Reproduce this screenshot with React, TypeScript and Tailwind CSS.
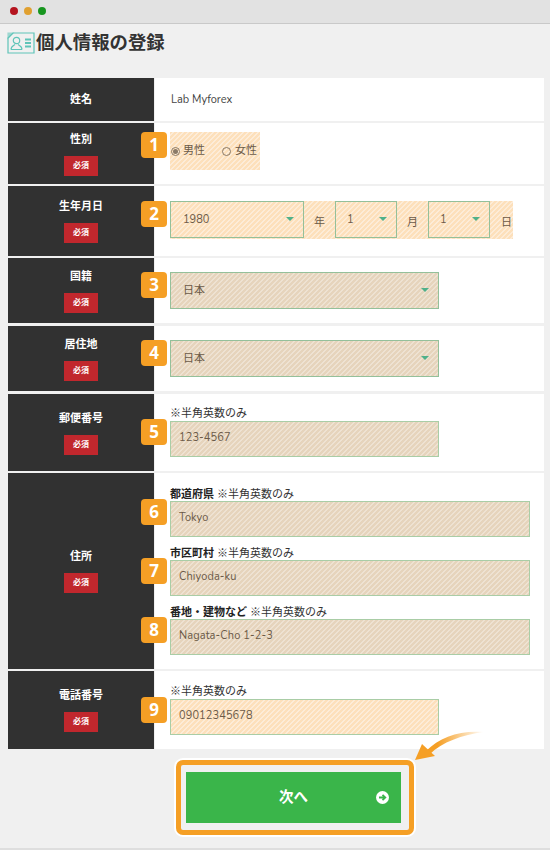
import type { ReactNode } from 'react';

const LIGHT = 'bg-[linear-gradient(135deg,#fde0bb_25%,#fdecd8_25%,#fdecd8_50%,#fde0bb_50%,#fde0bb_75%,#fdecd8_75%)] bg-[length:5px_5px]';
const DARK = 'bg-[linear-gradient(135deg,#e6d4bc_25%,#eee2d2_25%,#eee2d2_50%,#e6d4bc_50%,#e6d4bc_75%,#eee2d2_75%)] bg-[length:5px_5px]';
const FONT = "font-['Nunito','Lato','Noto_Sans_CJK_JP',sans-serif]";

function Num({ n, className = 'top-0' }: { n: number; className?: string }) {
    return (
        <div className={`absolute left-[-29px] ${className} w-[26px] h-[26px] rounded-[4px] bg-[#f59f25] text-white text-[17px] font-bold leading-[26px] text-center font-['Open_Sans',sans-serif]`}>
            {n}
        </div>
    );
}

function Caret() {
    return <div className="w-0 h-0 border-x-[4px] border-x-transparent border-t-[4px] border-t-[#4fb08a]" />;
}

function Select({ value, className, tone = '' }: { value: string; className: string; tone?: string }) {
    return (
        <div className={`relative h-[37px] border border-[#94c09a] pl-[12px] text-[11px] leading-[35px] text-[#6b5a48] ${tone} ${className}`}>
            {value}
            <div className="absolute top-[15px] right-[9px]">
                <Caret />
            </div>
        </div>
    );
}

function Field({ value, width, tone }: { value: string; width: string; tone: string }) {
    return (
        <div className={`h-[36px] border border-[#a9cda6] pl-[8px] text-[11px] leading-[32px] tracking-[0.1px] text-[#6b5a48] ${width} ${tone}`}>
            {value}
        </div>
    );
}

function Row({ label, height, required = true, children, contentClass = '' }: { label: string; height: string; required?: boolean; children: ReactNode; contentClass?: string }) {
    return (
        <div className={`flex ${height}`}>
            <div className="w-[146px] shrink-0 bg-[#313131] flex flex-col items-center justify-center gap-[9px] text-white">
                <div className={`text-[11px] font-bold leading-[14px] ${required ? 'mt-[1px]' : ''}`}>{label}</div>
                {required && (
                    <div className="w-[34px] h-[20px] bg-[#c1272d] text-[8px] font-bold leading-[20px] text-center">必須</div>
                )}
            </div>
            <div className={`ml-px flex-1 bg-white pl-[15px] ${contentClass}`}>{children}</div>
        </div>
    );
}

function Note({ bold, children }: { bold?: string; children?: ReactNode }) {
    return (
        <div className="h-[12px] text-[11px] leading-[14px] text-[#333]">
            {bold && <b className="font-bold text-[#222] mr-[3px]">{bold}</b>}
            {children ?? '※半角英数のみ'}
        </div>
    );
}

export default function App() {
    return (
        <div className={`relative w-[550px] h-[850px] overflow-hidden bg-[#f0f0f0] border-b-2 border-[#dedede] ${FONT}`}>
            {/* Window title bar */}
            <div className="h-[24px] bg-[#e2e2e2] border-b border-[#c9c9c9] flex items-center gap-[6px] pl-[10px] pb-[2px]">
                <span className="w-2 h-2 rounded-full bg-[#b5141f]" />
                <span className="w-2 h-2 rounded-full bg-[#e0a030]" />
                <span className="w-2 h-2 rounded-full bg-[#17961f]" />
            </div>

            <div className="px-[6px]">
                {/* Heading */}
                <div className="h-[54px] pt-[8px] flex items-start">
                    <svg width="28" height="22" viewBox="0 0 28 22" fill="none" stroke="#5fc4b8" strokeWidth="1.2" className="ml-px shrink-0">
                        <path d="M1 6 L6 1 H27 V21 H1 Z" />
                        <path d="M1 1 H6 L1 6 Z" fill="#5fc4b8" opacity="0.55" />
                        <circle cx="9.5" cy="8.5" r="3.2" />
                        <path d="M4 17.5 C4 14 7 13.5 8 12.5 M15 17.5 C15 14 12 13.5 11 12.5 M4 17.5 H15" />
                        <path d="M18 7.5 H24 M18 11 H24 M18 14.5 H24" strokeWidth="1.8" />
                    </svg>
                    <h1 className="ml-px mt-[-2px] text-[18.4px] font-bold leading-[22px] text-[#333] font-['Noto_Sans_CJK_JP',sans-serif]">個人情報の登録</h1>
                </div>

                {/* Form table */}
                <div className="ml-[2px] flex flex-col">
                    <Row label="姓名" height="h-[43px] mb-[2px]" required={false} contentClass="pl-[16px] text-[11px] leading-[44px] text-[#444]">
                        Lab Myforex
                    </Row>

                    <Row label="性別" height="h-[61px] mb-[2px]" contentClass="pt-[9px]">
                        <div className={`relative w-[90px] h-[38px] flex items-center pl-[1px] text-[11px] text-[#6b5a48] ${LIGHT}`}>
                            <Num n={1} />
                            <span className="w-[9px] h-[9px] rounded-full border border-[#8a7a68] flex items-center justify-center mr-[3px]">
                                <span className="w-[5px] h-[5px] rounded-full bg-[#8a7a68]" />
                            </span>
                            男性
                            <span className="w-[9px] h-[9px] rounded-full border border-[#8a7a68] ml-[17px] mr-[4px]" />
                            女性
                        </div>
                    </Row>

                    <Row label="生年月日" height="h-[70px] mb-[2px]" contentClass="pt-[15px]">
                        <div className={`relative w-[343px] h-[38px] flex text-[11px] text-[#6b5a48] ${LIGHT}`}>
                            <Num n={2} />
                            <Select value="1980" className="w-[134px]" />
                            <div className="w-[31px] text-center leading-[44px]">年</div>
                            <Select value="1" className="w-[62px] !pl-[11px]" />
                            <div className="w-[31px] text-center leading-[44px]">月</div>
                            <Select value="1" className="w-[62px] !pl-[11px]" />
                            <div className="w-[23px] text-right pr-[1px] leading-[44px]">日</div>
                        </div>
                    </Row>

                    <Row label="国籍" height="h-[65px] mb-[3px]" contentClass="pt-[14px]">
                        <div className="relative w-[269px]">
                            <Num n={3} />
                            <Select value="日本" className="w-full" tone={DARK} />
                        </div>
                    </Row>

                    <Row label="居住地" height="h-[65px] mb-[3px]" contentClass="pt-[14px]">
                        <div className="relative w-[269px]">
                            <Num n={4} />
                            <Select value="日本" className="w-full" tone={DARK} />
                        </div>
                    </Row>

                    <Row label="郵便番号" height="h-[77px] mb-[2px]" contentClass="pt-[13px]">
                        <Note />
                        <div className="relative mt-[2px] w-[269px]">
                            <Num n={5} className="top-[-2px]" />
                            <Field value="123-4567" width="w-full" tone={DARK} />
                        </div>
                    </Row>

                    <Row label="住所" height="h-[196px] mb-[2px]" contentClass="pt-[15px]">
                        <Note bold="都道府県" />
                        <div className="relative mt-[1px] mb-[10px] w-[360px]">
                            <Num n={6} className="top-[-2px]" />
                            <Field value="Tokyo" width="w-full" tone={DARK} />
                        </div>
                        <Note bold="市区町村" />
                        <div className="relative mt-[1px] mb-[10px] w-[360px]">
                            <Num n={7} className="top-[-2px]" />
                            <Field value="Chiyoda-ku" width="w-full" tone={DARK} />
                        </div>
                        <Note bold="番地・建物など" />
                        <div className="relative mt-[1px] w-[360px]">
                            <Num n={8} className="top-[-2px]" />
                            <Field value="Nagata-Cho 1-2-3" width="w-full" tone={DARK} />
                        </div>
                    </Row>

                    <Row label="電話番号" height="h-[78px]" contentClass="pt-[14px]">
                        <Note />
                        <div className="relative mt-[2px] w-[269px]">
                            <Num n={9} className="top-[-2px]" />
                            <Field value="09012345678" width="w-full" tone={LIGHT} />
                        </div>
                    </Row>
                </div>

                {/* Next button */}
                <div className="mt-[9px] ml-[168px] w-[242px] h-[79px] rounded-[9px] border-2 border-white">
                    <div className="w-full h-full rounded-[7px] border-[5px] border-[#f59f25] pl-[5px] pr-[8px] py-[7px]">
                        <div className="relative h-full bg-[#3ab54a] flex items-center justify-center text-white text-[14.5px] font-bold">
                            次へ
                            <svg width="13" height="13" viewBox="0 0 13 13" className="absolute right-[12px] top-[19px]">
                                <circle cx="6.5" cy="6.5" r="6.5" fill="#fff" />
                                <path d="M3 6.5 H9 M6.5 3.8 L9.3 6.5 L6.5 9.2" fill="none" stroke="#3ab54a" strokeWidth="1.8" />
                            </svg>
                        </div>
                    </div>
                </div>
            </div>

            {/* Arrow pointing at the button */}
            <svg width="80" height="36" viewBox="0 0 80 36" className="absolute left-[412px] top-[729px]">
                <defs>
                    <linearGradient id="fade" x1="0" x2="1" y1="0" y2="0">
                        <stop offset="0.2" stopColor="#f59f25" />
                        <stop offset="1" stopColor="#f59f25" stopOpacity="0" />
                    </linearGradient>
                </defs>
                <path d="M72 3 C48 1 28 8 14 22 L18 25 C30 13 50 6 72 3 Z" fill="url(#fade)" />
                <path d="M3 31 L10 15 L23 27 Z" fill="#f59f25" />
            </svg>
        </div>
    );
}
